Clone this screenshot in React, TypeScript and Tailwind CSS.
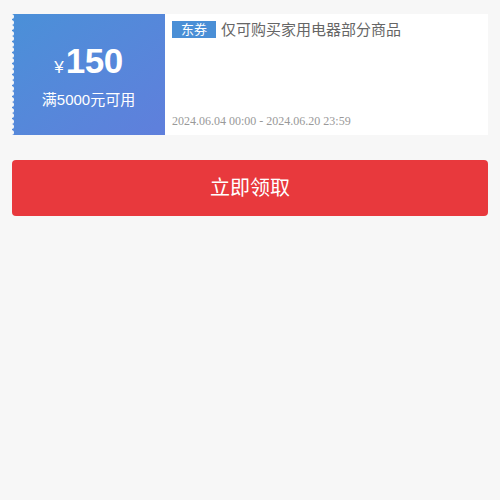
import React from 'react';

const dots = Array.from({ length: 22 });

const App: React.FC = () => {
  return (
    <div className="min-h-[500px] w-full bg-[#f7f7f7] px-3 pt-[14px] font-['Liberation_Sans','Noto_Sans_CJK_SC',sans-serif]">
      <div className="flex h-[121px] bg-white">
        <div className="relative flex w-[153px] shrink-0 flex-col items-center justify-center bg-gradient-to-br from-[#4a90d8] to-[#5f7fdc] text-white">
          <div className="absolute -left-[3px] top-0 flex h-full flex-col justify-around">
            {dots.map((_, i) => (
              <span key={i} className="block h-[5px] w-[5px] rounded-full bg-[#f7f7f7]" />
            ))}
          </div>
          <div className="flex items-baseline leading-none">
            <span className="mr-[2px] text-[17px]">¥</span>
            <span className="text-[35px] font-bold tracking-[-0.5px]">150</span>
          </div>
          <div className="mt-[14px] text-[15px] leading-none">满5000元可用</div>
        </div>
        <div className="flex flex-1 flex-col justify-between px-[7px] pt-[7px] pb-[8px]">
          <div className="flex items-center">
            <span className="flex h-[17px] w-[44px] items-center justify-center bg-[#4a8fd6] text-[13px] text-white">东券</span>
            <span className="ml-[5px] text-[15px] leading-none text-[#666]">仅可购买家用电器部分商品</span>
          </div>
          <div className="font-['Liberation_Serif',serif] text-[12px] leading-none text-[#999]">
            2024.06.04 00:00 - 2024.06.20 23:59
          </div>
        </div>
      </div>
      <button className="mt-[25px] flex h-[56px] w-full items-center justify-center rounded-[4px] bg-[#e8393d] text-[20px] text-white">
        立即领取
      </button>
    </div>
  );
};

export default App;
